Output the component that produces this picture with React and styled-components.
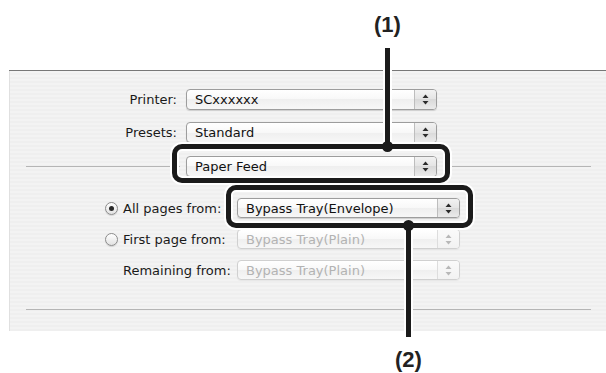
import React from 'react';
import styled, { createGlobalStyle } from 'styled-components';

const GlobalStyle = createGlobalStyle`
  html, body {
    margin: 0;
    padding: 0;
    background: #ffffff;
  }
  body {
    font-family: "DejaVu Sans", "Liberation Sans", sans-serif;
  }
`;

const Page = styled.div`
  position: relative;
  width: 606px;
  height: 373px;
  overflow: hidden;
  box-sizing: border-box;
  padding: 70px 0 0 9px;
`;

const Panel = styled.div`
  height: 261px;
  box-sizing: border-box;
  padding-top: 18px;
  border-top: 1px solid #777777;
  box-shadow: inset 1px 0 0 #e0e0e0;
  background: repeating-linear-gradient(
    to bottom,
    #f3f3f3 0px,
    #f3f3f3 2px,
    #efefef 2px,
    #efefef 4px
  );
`;

const FieldGrid = styled.div`
  display: grid;
  grid-template-columns: 168px 251px;
  column-gap: 9px;
  row-gap: 12px;
  align-items: center;
`;

const Label = styled.span`
  font-size: 13px;
  color: #1a1a1a;
  white-space: nowrap;
  text-align: ${(p) => (p.$right ? 'right' : 'left')};
`;

const SeparatorRow = styled.div`
  display: grid;
  grid-template-columns: 154px 251px 1fr;
  column-gap: 6px;
  align-items: center;
  margin: 13px 15px 0 17px;
`;

const Rule = styled.div`
  height: 1px;
  background: #b5b5b5;
  margin: ${(p) => p.$margin || '0'};
`;

const SourceGrid = styled.div`
  display: grid;
  grid-template-columns: 18px 114px 223px;
  row-gap: 11px;
  align-items: center;
  margin-top: 21px;
  padding-left: 96px;
`;

const RadioSlot = styled.span`
  display: flex;
  align-items: center;
`;

const Radio = styled.span`
  width: 13px;
  height: 13px;
  box-sizing: border-box;
  border-radius: 50%;
  border: 1px solid #8c8c8c;
  background: linear-gradient(#ffffff, #e2e2e2);
  box-shadow: 0 1px 1px rgba(0, 0, 0, 0.12);
  display: flex;
  align-items: center;
  justify-content: center;

  &::after {
    content: '';
    display: ${(p) => (p.$checked ? 'block' : 'none')};
    width: 5px;
    height: 5px;
    border-radius: 50%;
    background: #2a2a2a;
  }
`;

const PopupBox = styled.div`
  display: flex;
  align-items: stretch;
  height: ${(p) => p.$h}px;
  box-sizing: border-box;
  border: 1px solid ${(p) => (p.$disabled ? '#d0d0d0' : '#9d9d9d')};
  border-radius: 4px;
  background: linear-gradient(#ffffff, #f8f8f8 50%, #efefef 50%, #f7f7f7);
  box-shadow: 0 1px 1px rgba(0, 0, 0, ${(p) => (p.$disabled ? 0.05 : 0.14)});
  color: ${(p) => (p.$disabled ? '#b3b3b3' : '#111111')};
`;

const PopupText = styled.span`
  flex: 1;
  display: flex;
  align-items: center;
  padding-left: 8px;
  font-size: 13px;
  white-space: nowrap;
  overflow: hidden;
`;

const Stepper = styled.span`
  width: 21px;
  display: flex;
  align-items: center;
  justify-content: center;
  border-left: 1px solid ${(p) => (p.$disabled ? '#dddddd' : '#bdbdbd')};
  border-radius: 0 3px 3px 0;
  background: ${(p) =>
    p.$disabled
      ? 'linear-gradient(#fafafa, #f2f2f2)'
      : 'linear-gradient(#f2f2f2, #e4e4e4 50%, #d9d9d9 50%, #ebebeb)'};
`;

const Arrows = ({ color }) => (
  <svg width="7" height="11" viewBox="0 0 7 11">
    <path d="M3.5 0.5 L6.5 4 L0.5 4 Z" fill={color} />
    <path d="M0.5 7 L6.5 7 L3.5 10.5 Z" fill={color} />
  </svg>
);

const Popup = ({ value, disabled, h = 21 }) => (
  <PopupBox $disabled={disabled} $h={h}>
    <PopupText>{value}</PopupText>
    <Stepper $disabled={disabled}>
      <Arrows color={disabled ? '#b8b8b8' : '#2b2b2b'} />
    </Stepper>
  </PopupBox>
);

/* callout overlays */
const CalloutBox = styled.div`
  position: absolute;
  left: ${(p) => p.$x}px;
  top: ${(p) => p.$y}px;
  width: ${(p) => p.$w}px;
  height: ${(p) => p.$h}px;
  box-sizing: border-box;
  border: 5px solid #1b1b1b;
  border-radius: 10px;
  box-shadow: 0 0 0 2px #ffffff, inset 0 0 0 2px #ffffff;
`;

const LeadLine = styled.div`
  position: absolute;
  left: ${(p) => p.$x}px;
  top: ${(p) => p.$y}px;
  width: 5px;
  height: ${(p) => p.$h}px;
  background: #1b1b1b;
  box-shadow: 0 0 0 2px #ffffff;
`;

const Dot = styled.div`
  position: absolute;
  left: ${(p) => p.$x - 5.5}px;
  top: ${(p) => p.$y - 5.5}px;
  width: 11px;
  height: 11px;
  border-radius: 50%;
  background: #1b1b1b;
`;

const CalloutNum = styled.div`
  position: absolute;
  left: ${(p) => p.$x - 30}px;
  top: ${(p) => p.$y}px;
  width: 60px;
  text-align: center;
  font-family: "Liberation Sans", Arial, sans-serif;
  font-weight: bold;
  font-size: 22px;
  line-height: 1;
  color: #222222;
`;

export default function App() {
  return (
    <>
      <GlobalStyle />
      <Page>
        <Panel>
          <FieldGrid>
            <Label $right>Printer:</Label>
            <Popup value="SCxxxxxx" />
            <Label $right>Presets:</Label>
            <Popup value="Standard" />
          </FieldGrid>

          <SeparatorRow>
            <Rule />
            <Popup value="Paper Feed" />
            <Rule />
          </SeparatorRow>

          <SourceGrid>
            <RadioSlot>
              <Radio $checked />
            </RadioSlot>
            <Label>All pages from:</Label>
            <Popup value="Bypass Tray(Envelope)" h={20} />

            <RadioSlot>
              <Radio />
            </RadioSlot>
            <Label>First page from:</Label>
            <Popup value="Bypass Tray(Plain)" h={20} disabled />

            <RadioSlot />
            <Label>Remaining from:</Label>
            <Popup value="Bypass Tray(Plain)" h={20} disabled />
          </SourceGrid>

          <Rule $margin="29px 15px 0 17px" />
        </Panel>

        <CalloutBox $x={172} $y={144} $w={278} $h={39} />
        <CalloutBox $x={226} $y={185} $w={247} $h={43} />

        <CalloutNum $x={387.5} $y={14}>(1)</CalloutNum>
        <LeadLine $x={385} $y={48} $h={98} />
        <Dot $x={387.5} $y={146} />

        <LeadLine $x={406} $y={225} $h={112} />
        <Dot $x={408.5} $y={225} />
        <CalloutNum $x={408.5} $y={349}>(2)</CalloutNum>
      </Page>
    </>
  );
}
